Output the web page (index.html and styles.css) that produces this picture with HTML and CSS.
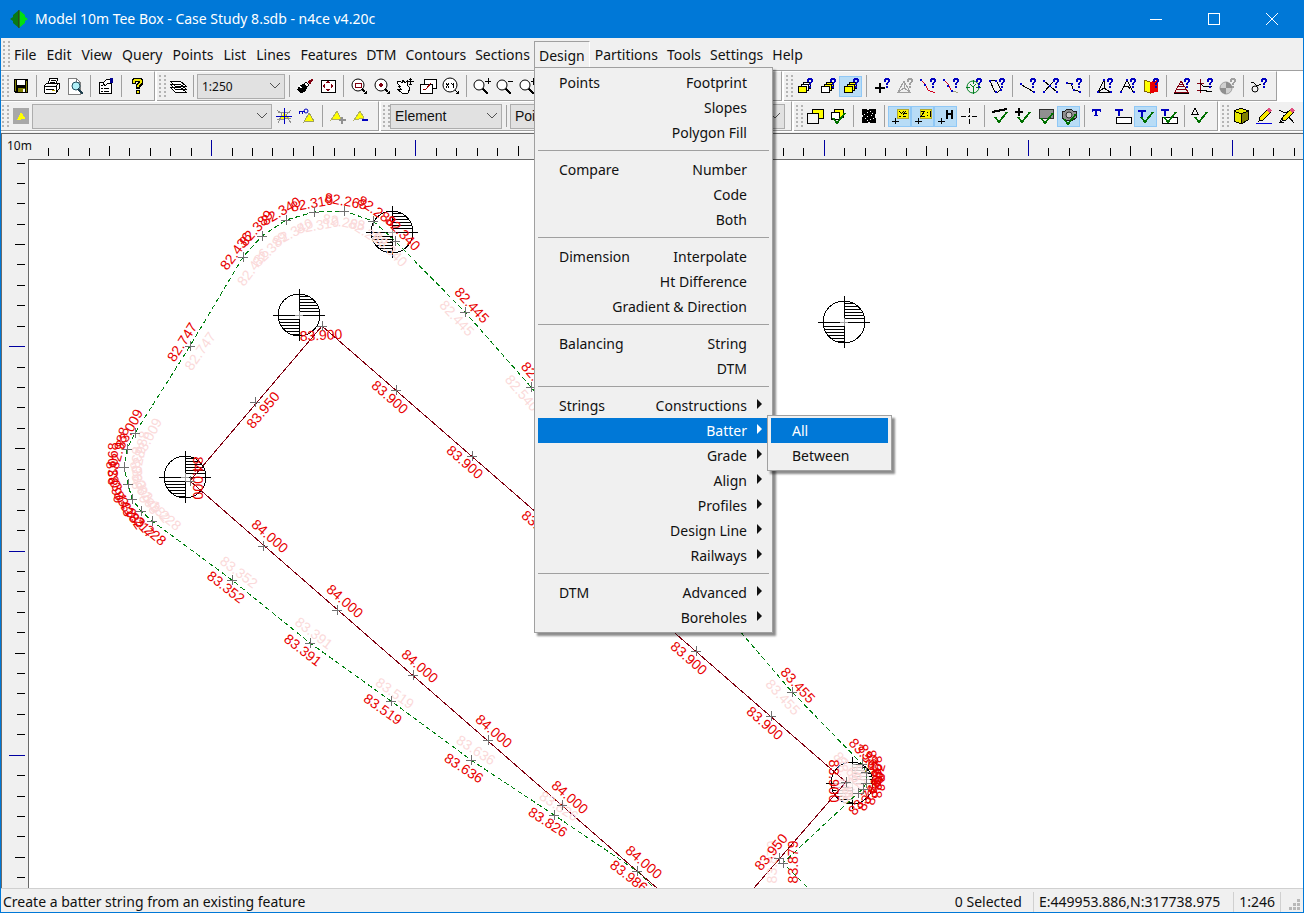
FILE: index.html
```html
<!DOCTYPE html>
<html lang="en">
<head>
<meta charset="utf-8">
<title>Model 10m Tee Box - Case Study 8.sdb - n4ce v4.20c</title>
<link rel="stylesheet" href="styles.css">
</head>
<body>
<svg class="defs" aria-hidden="true">
  <symbol id="qm" viewBox="0 0 18 18"><path d="M12 1h4v2h-4zM11 2h2v3h-2zM15 2h2v3h-2zM14 5h2v1h-2zM13 6h2v2h-2zM13 9h2v2h-2z" fill="currentColor"/></symbol>
  <symbol id="q" viewBox="0 0 18 18"><use href="#qm" color="#0000c0"/></symbol>
  <symbol id="tick" viewBox="0 0 18 18"><path d="M4 10l4 5 8-10" fill="none" stroke="#007000" stroke-width="2"/></symbol>
  <symbol id="chev" viewBox="0 0 12 8"><path d="M1 1l5 5 5-5" fill="none" stroke="#505050"/></symbol>
  <symbol id="arr" viewBox="0 0 5 10"><path d="M0 0l5 5-5 5z" fill="currentColor"/></symbol>
</svg>
<div class="window">
  <header class="titlebar">
    <svg class="logo" viewBox="0 0 18 18"><path d="M9 0L3 5v2L0 9l3 2v2l6 5z" fill="#0a7a14"/><path d="M9 0l6 5v2l3 2-3 2v2l-6 5z" fill="#00e010"/><path d="M9 0v18" stroke="#402020"/></svg>
    <h1>Model 10m Tee Box - Case Study 8.sdb - n4ce v4.20c</h1>
    <button class="winbtn" aria-label="Minimize"><svg viewBox="0 0 12 12"><path d="M0 6h12"/></svg></button>
    <button class="winbtn" aria-label="Maximize"><svg viewBox="0 0 12 12"><path d="M0 0h11v11H0z"/></svg></button>
    <button class="winbtn" aria-label="Close"><svg viewBox="0 0 12 12"><path class="smooth" d="M0 0l12 12M12 0L0 12"/></svg></button>
  </header>

  <nav class="menubar">
    <span class="grip"></span>
    <button>File</button><button>Edit</button><button>View</button><button>Query</button><button>Points</button><button>List</button><button>Lines</button><button>Features</button><button>DTM</button><button>Contours</button><button>Sections</button>
    <div class="open">
      <button>Design</button>
      <div class="popup">
        <button><span>Points</span><span>Footprint</span></button>
        <button><span></span><span>Slopes</span></button>
        <button><span></span><span>Polygon Fill</span></button>
        <hr>
        <button><span>Compare</span><span>Number</span></button>
        <button><span></span><span>Code</span></button>
        <button><span></span><span>Both</span></button>
        <hr>
        <button><span>Dimension</span><span>Interpolate</span></button>
        <button><span></span><span>Ht Difference</span></button>
        <button><span></span><span>Gradient &amp; Direction</span></button>
        <hr>
        <button><span>Balancing</span><span>String</span></button>
        <button><span></span><span>DTM</span></button>
        <hr>
        <button class="sub"><span>Strings</span><span>Constructions</span><svg><use href="#arr"/></svg></button>
        <div class="host">
          <button class="sub active"><span></span><span>Batter</span><svg><use href="#arr"/></svg></button>
          <div class="popup side">
            <button class="active"><span>All</span></button>
            <button><span>Between</span></button>
          </div>
        </div>
        <button class="sub"><span></span><span>Grade</span><svg><use href="#arr"/></svg></button>
        <button class="sub"><span></span><span>Align</span><svg><use href="#arr"/></svg></button>
        <button class="sub"><span></span><span>Profiles</span><svg><use href="#arr"/></svg></button>
        <button class="sub"><span></span><span>Design Line</span><svg><use href="#arr"/></svg></button>
        <button class="sub"><span></span><span>Railways</span><svg><use href="#arr"/></svg></button>
        <hr>
        <button class="sub"><span>DTM</span><span>Advanced</span><svg><use href="#arr"/></svg></button>
        <button class="sub"><span></span><span>Boreholes</span><svg><use href="#arr"/></svg></button>
      </div>
    </div>
    <button>Partitions</button><button>Tools</button><button>Settings</button><button>Help</button>
  </nav>

  <div class="barrow">
    <div class="bar">
      <span class="grip"></span>
      <button class="tb" aria-label="Save"><svg viewBox="0 0 18 18"><path d="M2 2h14v14H3l-1-1z" fill="#000"/><path d="M5 3h8v5H5z" fill="#fff"/><path d="M6 11h7v4H6z" fill="#808000"/><path d="M11 12h2v3h-2z" fill="#fff"/><path d="M3 3h1v11H3zM14 4h1v11h-1z" fill="#808000"/></svg></button>
      <i class="sep"></i>
      <button class="tb" aria-label="Print"><svg viewBox="0 0 18 18"><path d="M5 7l2-6h8l-2 6M1 9l3-3h12v6l-3 4H2zM1 9h12l3-3M13 9v6M3 12h8" fill="#fff" stroke="#000"/><path d="M8 3h5M7 5h5" stroke="#000"/><path d="M9 13h3" stroke="#c0a000"/></svg></button>
      <button class="tb" aria-label="Print preview"><svg viewBox="0 0 18 18"><path d="M2 1h8l4 4v12H2z" fill="#fff" stroke="#808080"/><path d="M10 1v4h4" fill="none" stroke="#808080"/><circle cx="10" cy="9" r="4" fill="#b0f0f8" stroke="#205060"/><path d="M12 12l5 5" stroke="#204050" stroke-width="2"/></svg></button>
      <i class="sep"></i>
      <button class="tb" aria-label="Properties"><svg viewBox="0 0 18 18"><path d="M2 5h12v11H2z" fill="#fff" stroke="#000"/><path d="M4 8h2M4 11h2M4 14h2M7 11h5M7 14h5" stroke="#000"/><path d="M6 6l4-4h4l2 3-3 2-2-1-3 3z" fill="#fff" stroke="#000"/><path d="M13 1h3v5h-3z" fill="#000090"/></svg></button>
      <i class="sep"></i>
      <button class="tb" aria-label="Help"><svg viewBox="0 0 18 18"><path d="M5 1h9l1 2v4l-3 3v2H8V8l2-3H8v2H4V3zM8 13h4v4H8z" fill="#000"/><path d="M6 2h7v1h1v3h-1v1h-1v1h-1v2H9V8h1V7h1V6h1V4H7v2H5V3h1zM9 14h2v2H9z" fill="#f0e800"/></svg></button>
    </div>
    <div class="bar grow">
      <span class="grip"></span>
      <button class="tb" aria-label="Layers"><svg viewBox="0 0 18 18"><path d="M1 10h10l6 5H6zM1 7h10l6 5H6zM1 4h10l6 5H6z" fill="#fff" stroke="#000"/></svg></button>
      <i class="sep"></i>
      <label class="combo scale"><select aria-label="Scale"><option>1:250</option></select><svg><use href="#chev"/></svg></label>
      <i class="sep"></i>
      <button class="tb" aria-label="Redraw"><svg viewBox="0 0 18 18"><path d="M3 9l4-2 4 4-2 4-5 1-3-3z" fill="#000"/><path d="M8 7l2-2 3 3-2 2z" fill="#fff" stroke="#000"/><path d="M11 5l5-3 1 1-3 5z" fill="#800010"/><path d="M2 8l4 3" stroke="#fff"/></svg></button>
      <button class="tb" aria-label="Zoom extents"><svg viewBox="0 0 18 18"><path d="M2 3h14v12H2z" fill="#fff" stroke="#000"/><path d="M8 4h2v2H8zM8 12h2v2H8zM4 8h2v2H4zM12 8h2v2h-2zM7 5h4v1H7zM7 12h4v1H7zM5 7h1v4H5zM12 7h1v4h-1z" fill="#800010"/></svg></button>
      <i class="sep"></i>
      <button class="tb" aria-label="Zoom window"><svg viewBox="0 0 18 18"><circle cx="8" cy="8" r="6" fill="#fff" stroke="#000"/><path d="M5 6h6v4H5z" fill="none" stroke="#800010"/><path d="M12 12l3 3" stroke="#000" stroke-width="2"/><path d="M17 13v4h-4z"/></svg></button>
      <button class="tb" aria-label="Zoom centre"><svg viewBox="0 0 18 18"><circle cx="8" cy="8" r="6" fill="#fff" stroke="#000"/><path d="M8 6v4M6 8h4" stroke="#800010" stroke-width="2"/><path d="M12 12l3 3" stroke="#000" stroke-width="2"/><path d="M17 13v4h-4z"/></svg></button>
      <button class="tb" aria-label="Pan"><svg viewBox="0 0 18 18"><path d="M1 5l3-1 2 2 1-3 2 3 2-2v4l3 3-2 5H6l-5-4h4L2 9l3 1-4-4z" fill="#fff" stroke="#000"/><path d="M14 1v7M11 4h7M13 2h3M13 7h3" stroke="#000"/></svg></button>
      <button class="tb" aria-label="Windows"><svg viewBox="0 0 18 18"><path d="M5 2h12v9H5z" fill="#fff" stroke="#000"/><path d="M1 7h12v9H1z" fill="#fff" stroke="#000"/><path d="M4 12h3l5-6" fill="none" stroke="#900" /></svg></button>
      <button class="tb" aria-label="Zoom to coordinate"><svg viewBox="0 0 18 18"><circle cx="8" cy="8" r="7" fill="#fff" stroke="#000"/><path d="M4 6l3 5M7 6l-3 5M9 6l2 2 1-2M11 8v3M13 13l2 2" fill="none" stroke="#000"/><path d="M17 13v4h-4z"/></svg></button>
      <i class="sep"></i>
      <button class="tb" aria-label="Zoom in"><svg viewBox="0 0 18 18"><circle cx="6" cy="8" r="5" fill="#fff" stroke="#000"/><path d="M10 12l5 5" stroke="#000" stroke-width="2"/><path d="M12 4h6M15 1v6" stroke="#000"/></svg></button>
      <button class="tb" aria-label="Zoom out"><svg viewBox="0 0 18 18"><circle cx="6" cy="8" r="5" fill="#fff" stroke="#000"/><path d="M10 12l5 5" stroke="#000" stroke-width="2"/><path d="M12 4h5" stroke="#000"/></svg></button>
      <button class="tb" aria-label="Zoom factor"><svg viewBox="0 0 18 18"><circle cx="6" cy="8" r="5" fill="#fff" stroke="#000"/><path d="M10 12l5 5" stroke="#000" stroke-width="2"/><path d="M17 1h-2l-1 7M12 4h5" fill="none" stroke="#000"/></svg></button>
    </div>
    <div class="bar">
      <span class="grip"></span>
      <button class="tb" aria-label="Query front layer"><svg viewBox="0 0 18 18"><path d="M7 5h7v6H7z" fill="#fff" stroke="#000"/><path d="M5 7h7v6H5z" fill="#fff" stroke="#000"/><path d="M2 9h8v6H2z" fill="#ff0" stroke="#000"/><use href="#q"/></svg></button>
      <button class="tb" aria-label="Query back layer"><svg viewBox="0 0 18 18"><path d="M7 5h7v6H7z" fill="#ff0" stroke="#000"/><path d="M5 7h7v6H5z" fill="#ff0" stroke="#000"/><path d="M2 9h8v6H2z" fill="#fff" stroke="#000"/><use href="#q"/></svg></button>
      <button class="tb on" aria-label="Query all layers"><svg viewBox="0 0 18 18"><path d="M7 5h7v6H7z" fill="#ff0" stroke="#000"/><path d="M5 7h7v6H5z" fill="#ff0" stroke="#000"/><path d="M2 9h8v6H2z" fill="#ff0" stroke="#000"/><use href="#q"/></svg></button>
      <i class="sep"></i>
      <button class="tb" aria-label="Query point"><svg viewBox="0 0 18 18"><path d="M2 11h10M7 6v10" stroke="#000" stroke-width="2"/><use href="#q"/></svg></button>
      <button class="tb" aria-label="Query triangle" disabled><svg viewBox="0 0 18 18"><path d="M2 15L8 4l6 11zM2 15l6-4 6 4M8 4v7" fill="none" stroke="#a0a0a0"/><use href="#qm" color="#a0a0a0"/></svg></button>
      <button class="tb" aria-label="Query line"><svg viewBox="0 0 18 18"><path d="M2 3l4 4 3 6 7 3" fill="none" stroke="#d00020"/><path d="M1 2h2v2H1zM5 7h2v2H5z" fill="#00c"/><use href="#q"/></svg></button>
      <button class="tb" aria-label="Query segment"><svg viewBox="0 0 18 18"><path d="M2 3l4 4 3 6" fill="none" stroke="#d00020"/><path d="M9 13l7 3" stroke="#a0a080"/><path d="M1 2h2v2H1zM5 8h2v2H5zM9 13h2v2H9z" fill="#00c"/><use href="#q"/></svg></button>
      <button class="tb" aria-label="Query circle"><svg viewBox="0 0 18 18"><circle cx="8" cy="10" r="6" fill="none" stroke="#008020"/><path d="M8 3v4M8 13v4M1 10h4M11 10h5M5 7l3 3 3-3M8 10v3" fill="none" stroke="#008020"/><use href="#q"/></svg></button>
      <button class="tb" aria-label="Query shape"><svg viewBox="0 0 18 18"><path d="M2 4l6-1 5 10-5 3-2-3z" fill="none" stroke="#000"/><path d="M1 3h2v2H1zM7 3h2v2H7zM12 12h2v2h-2zM7 14h2v2H7z" fill="#00c"/><use href="#q"/></svg></button>
      <i class="sep"></i>
      <button class="tb" aria-label="Query string"><svg viewBox="0 0 18 18"><path d="M1 7l14 8" stroke="#000"/><path d="M1 6h2v2H1zM14 14h2v2h-2z" fill="#00c"/><use href="#q"/></svg></button>
      <button class="tb" aria-label="Query intersection"><svg viewBox="0 0 18 18"><path d="M2 4l13 11M2 15l9-10" stroke="#000"/><path d="M1 3h2v2H1zM14 14h2v2h-2zM1 14h2v2H1zM7 8h2v2H7z" fill="#00c"/><use href="#q"/></svg></button>
      <button class="tb" aria-label="Query curve"><svg viewBox="0 0 18 18"><path d="M1 6h5l2 6 7 3" fill="none" stroke="#000"/><path d="M1 5h2v2H1zM6 6h2v2H6zM8 12h2v2H8zM14 14h2v2h-2z" fill="#00c"/><use href="#q"/></svg></button>
      <i class="sep"></i>
      <button class="tb" aria-label="Query angle"><svg viewBox="0 0 18 18"><path d="M2 15L8 3v8l6 4zM8 11l-6 4" fill="none" stroke="#000"/><path d="M1 14h2v2H1zM7 2h2v2H7zM14 14h2v2h-2z" fill="#00c"/><use href="#q"/></svg></button>
      <button class="tb" aria-label="Query area"><svg viewBox="0 0 18 18"><path d="M2 15L8 3l6 12M5 10c3-2 5 0 6 2" fill="none" stroke="#000"/><path d="M1 14h2v2H1zM7 2h2v2H7zM14 14h2v2h-2z" fill="#00c"/><use href="#q"/></svg></button>
      <button class="tb" aria-label="Query volume"><svg viewBox="0 0 18 18"><path d="M2 3l6 2v11l-6-2z" fill="#ff0" stroke="#806000"/><path d="M8 5l8-2v12l-8 1z" fill="#e80000"/><use href="#q"/></svg></button>
      <i class="sep"></i>
      <button class="tb" aria-label="Query contour"><svg viewBox="0 0 18 18"><path d="M2 15L8 4l7 11zM4 12l9 1M5 9l6 1M7 7l3 1" fill="none" stroke="#800010"/><path d="M1 16h15" stroke="#000"/><use href="#q"/></svg></button>
      <button class="tb" aria-label="Query section"><svg viewBox="0 0 18 18"><path d="M4 2v14M1 6h7M1 13h5" stroke="#800010"/><path d="M4 13h5l3 2 4-1M4 6l4 4 5-1 3 1" fill="none" stroke="#000"/><use href="#q"/></svg></button>
      <button class="tb" aria-label="Query station" disabled><svg viewBox="0 0 18 18"><circle cx="7" cy="11" r="6" fill="#d0d0d0" stroke="#a0a0a0"/><path d="M7 5v6h6a6 6 0 0 0-6-6zM7 17v-6H1a6 6 0 0 0 6 6z" fill="#909090"/><use href="#qm" color="#a0a0a0"/></svg></button>
      <i class="sep"></i>
      <button class="tb" aria-label="Query object"><svg viewBox="0 0 18 18"><circle cx="5" cy="12" r="3" fill="none" stroke="#000"/><path d="M1 5l3 1 3 3 4-2" fill="none" stroke="#000"/><use href="#q"/></svg></button>
    </div>
    <div class="rest"></div>
  </div>

  <div class="barrow second">
    <div class="bar">
      <span class="grip"></span>
      <button class="tb" aria-label="Snap"><svg viewBox="0 0 18 18"><path d="M1 1h16v16H1z" fill="#a8a8a8"/><path d="M5 13l4-8 4 6v1z" fill="#ff0"/></svg></button>
      <label class="combo wide"><select aria-label="Feature"><option></option></select><svg><use href="#chev"/></svg></label>
      <button class="tb" aria-label="Crosshair"><svg viewBox="0 0 18 18"><path d="M5 12l4-7 5 6z" fill="#ff0"/><path d="M2 3l5 4-4 9M16 3l-5 5 5 8M2 13l14-2M3 6l12-1" fill="none" stroke="#909090"/><path d="M9 1v16M1 9h16" stroke="#0000c0"/></svg></button>
      <button class="tb" aria-label="Pick point"><svg viewBox="0 0 18 18"><path d="M6 15l5-9 5 8z" fill="#ff0" stroke="#a0a060"/><path d="M1 4h6M1 4v3M4 4v3" fill="none" stroke="#0000c0"/><circle cx="8" cy="4" r="2" fill="none" stroke="#0000c0"/></svg></button>
      <i class="sep"></i>
      <button class="tb" aria-label="Add point"><svg viewBox="0 0 18 18"><path d="M2 13l6-9 4 8z" fill="#ff0" stroke="#b0b060"/><path d="M10 13h7M13 10v7" stroke="#909090" stroke-width="2"/></svg></button>
      <button class="tb" aria-label="Remove point"><svg viewBox="0 0 18 18"><path d="M2 13l6-9 4 7z" fill="#ff0" stroke="#b0b060"/><path d="M10 13h6" stroke="#0000c0" stroke-width="2"/></svg></button>
    </div>
    <div class="bar grow">
      <span class="grip"></span>
      <label class="combo element"><select aria-label="Type"><option>Element</option></select><svg><use href="#chev"/></svg></label>
      <i class="sep"></i>
      <label class="combo fill"><select aria-label="Item"><option>Point</option></select><svg><use href="#chev"/></svg></label>
    </div>
    <div class="bar">
      <span class="grip"></span>
      <button class="tb" aria-label="Layers"><svg viewBox="0 0 18 18"><path d="M6 2h11v9H6z" fill="#ff0" stroke="#000"/><path d="M1 6h11v10H1z" fill="#f4f4f4" stroke="#000"/></svg></button>
      <button class="tb" aria-label="Check layers"><svg viewBox="0 0 18 18"><path d="M5 2h9v8H5z" fill="#ff0" stroke="#000"/><path d="M2 5h8v7H2z" fill="#fff" stroke="#000"/><use href="#tick" y="1"/></svg></button>
      <i class="sep"></i>
      <button class="tb" aria-label="Point display"><svg viewBox="0 0 18 18"><path d="M2 2h4l2 1 2-1h6v4l-1 3 1 3v4h-5l-2-1-2 1H2v-5l1-2-1-3z" fill="#000"/><path d="M4 7h1v1H4zM7 5h1v1H7zM10 4h1v1h-1zM12 6h1v1h-1zM11 8h1v1h-1zM5 11h1v1H5zM7 9h1v1H7zM10 12h1v1h-1zM13 11h1v1h-1zM7 13h1v1H7z" fill="#fff"/></svg></button>
      <i class="sep"></i>
      <button class="tb on" aria-label="Point codes"><svg viewBox="0 0 18 18"><path d="M6 2h11v9H6z" fill="#f8f000" stroke="#b0a830"/><path d="M8 4l3 3M13 4l-3 3M12 8l3-4M8 9h2M12 9h3M14 6h2" stroke="#000"/><path d="M1 14h7M4 11v6" stroke="#000"/></svg></button>
      <button class="tb on" aria-label="Point levels"><svg viewBox="0 0 18 18"><path d="M6 2h11v9H6z" fill="#f8f000" stroke="#b0a830"/><path d="M7 4h4l-4 5h4M13 5v1M13 8v1M16 4v6" fill="none" stroke="#000"/><path d="M1 14h7M4 11v6" stroke="#000"/></svg></button>
      <button class="tb on" aria-label="Point heights"><svg viewBox="0 0 18 18"><path d="M10 3v9M15 3v9M10 7h5" stroke="#000" stroke-width="2"/><path d="M1 14h7M4 11v6" stroke="#000"/></svg></button>
      <button class="tb" aria-label="Point markers"><svg viewBox="0 0 18 18"><path d="M1 9h5M12 9h5M8 9h2M9 1v5M9 12v5M9 8v2" stroke="#000"/></svg></button>
      <i class="sep"></i>
      <button class="tb" aria-label="Check lines"><svg viewBox="0 0 18 18"><path d="M1 5l15-3" stroke="#000" stroke-width="2"/><use href="#tick"/></svg></button>
      <button class="tb" aria-label="Check points"><svg viewBox="0 0 18 18"><path d="M1 5h8M5 1v8" stroke="#000" stroke-width="2"/><use href="#tick"/></svg></button>
      <button class="tb" aria-label="Check surfaces"><svg viewBox="0 0 18 18"><path d="M2 2h14v9H8l-2 1-4-1z" fill="#909090" stroke="#303030"/><use href="#tick" y="1"/></svg></button>
      <button class="tb on" aria-label="Check images"><svg viewBox="0 0 18 18"><path d="M2 4h3l2-2h4l2 2h3v7l-3 2H5l-3-2z" fill="#909090" stroke="#202020"/><use href="#tick" y="2"/><circle cx="9" cy="8" r="3" fill="#c8c8c8" stroke="#303030"/></svg></button>
      <i class="sep"></i>
      <button class="tb" aria-label="Text"><svg viewBox="0 0 18 18"><path d="M1 3h8M5 2v7" stroke="#0000c0" stroke-width="2"/><path d="M3 8h4M1 2v3M9 2v3" stroke="#0000c0"/></svg></button>
      <button class="tb" aria-label="Text box"><svg viewBox="0 0 18 18"><path d="M1 3h8M5 2v7" stroke="#0000c0" stroke-width="2"/><path d="M2 10h15v6H2z" fill="#fff" stroke="#000"/></svg></button>
      <button class="tb on" aria-label="Check text"><svg viewBox="0 0 18 18"><path d="M1 4h8M5 3v7" stroke="#0000c0" stroke-width="2"/><use href="#tick"/></svg></button>
      <button class="tb" aria-label="Check text box"><svg viewBox="0 0 18 18"><path d="M2 10h15v6H2z" fill="#fff" stroke="#000"/><path d="M1 3h8M5 2v7" stroke="#0000c0" stroke-width="2"/><use href="#tick"/></svg></button>
      <i class="sep"></i>
      <button class="tb" aria-label="Check symbols"><svg viewBox="0 0 18 18"><path d="M1 7l3-6 3 6z" fill="none" stroke="#000"/><use href="#tick"/></svg></button>
    </div>
    <div class="bar last">
      <span class="grip"></span>
      <button class="tb" aria-label="3D view"><svg viewBox="0 0 18 18"><path d="M2 4l7-3 7 3v9l-7 4-7-3z" fill="#e8e800" stroke="#000"/><path d="M9 7l7-3v9l-7 4z" fill="#808000" stroke="#000"/><path d="M2 4l7 3" stroke="#000"/></svg></button>
      <button class="tb" aria-label="Edit"><svg viewBox="0 0 18 18"><path d="M4 14l1-4 8-8 3 3-8 8z" fill="#f8e800" stroke="#000"/><path d="M13 2l3 3" stroke="#e05080" stroke-width="3"/><path d="M1 16h16" stroke="#0000e0"/></svg></button>
      <button class="tb" aria-label="Edit surface"><svg viewBox="0 0 18 18"><path d="M1 3l6 3 9-4M2 15l4-7M10 9l6 7M1 15h5" fill="none" stroke="#000"/><path d="M4 14l1-4 8-8 3 3-8 8z" fill="#f8e800" stroke="#000"/><path d="M13 2l3 3" stroke="#e05080" stroke-width="3"/></svg></button>
    </div>
  </div>

  <main class="view">
    <div class="unit">10m</div>
    <svg class="hruler"><g transform="translate(-28 -134)">
      <path stroke="#000" d="M48 148v8M68 148v8M89 148v8M109 146v10M129 148v8M150 148v8M170 148v8M191 148v8M232 148v8M252 148v8M272 148v8M293 148v8M313 146v10M334 148v8M354 148v8M375 148v8M395 148v8M436 148v8M456 148v8M477 148v8M497 148v8M518 146v10M538 148v8M559 148v8M579 148v8M599 148v8M640 148v8M660 148v8M681 148v8M701 148v8M722 146v10M742 148v8M763 148v8M783 148v8M803 148v8M844 148v8M865 148v8M885 148v8M906 148v8M926 146v10M947 148v8M967 148v8M987 148v8M1008 148v8M1048 148v8M1069 148v8M1089 148v8M1110 148v8M1130 146v10M1151 148v8M1171 148v8M1192 148v8M1212 148v8M1253 148v8M1273 148v8M1294 148v8"/>
      <path stroke="#0000a0" d="M211 140v16M415 140v16M619 140v16M824 140v16M1028 140v16M1232 140v16"/>
    </g></svg>
    <svg class="vruler"><g transform="translate(-2 -159)">
      <path stroke="#000" d="M17 163h8M17 183h8M17 203h8M17 224h8M15 244h10M17 264h8M17 285h8M17 305h8M17 326h8M17 367h8M17 387h8M17 407h8M17 428h8M15 448h10M17 469h8M17 489h8M17 510h8M17 530h8M17 571h8M17 591h8M17 612h8M17 632h8M15 653h10M17 673h8M17 693h8M17 714h8M17 734h8M17 775h8M17 796h8M17 816h8M17 836h8M15 857h10M17 877h8"/>
      <path stroke="#0000a0" d="M9 346h16M9 551h16M9 755h16"/>
    </g></svg>
    <svg class="plan">
      <defs>
        <g id="station"><circle r="21"/><path d="M-26 0h52M0-26v52M0-4h20M0-7h20M0-10h18M0-13h16M0-16h13M0-19h9M0 4h-20M0 7h-20M0 10h-18M0 13h-16M0 16h-13M0 19h-9"/><path class="mid" d="M-4 0h8M0-4v8"/></g>
        <path id="x" d="M-5 0h10M0-5v10"/>
      </defs>
      <g transform="translate(-29 -160)">
        <g class="stations"><use href="#station" x="392" y="232"/><use href="#station" x="299" y="315"/><use href="#station" x="185" y="477"/><use href="#station" x="844" y="322"/><use href="#station" x="852" y="783"/></g>
        <circle class="veil" cx="852" cy="782" r="18"/>
        <path class="crest" d="M657 888L637 871 190 481 322 326 846 782 754 888"/>
        <path class="toe" d="M652 886L637 871 554 815 471 760 391 701 310 643 232 580 152 521 141 511 132 499 128 484 124 467 127 449 135 433 190 346 243 257 262 236 286 220 314 212 344 211 373 221 395 241 465 312 531 387 792 692 862 764 866 772 866 783 863 789 858 793 783 863 808 888"/>
        <g class="ghost">
          <text transform="translate(253 267) rotate(-53)" dy="5">82.436</text>
          <text transform="translate(270 249) rotate(-45)" dy="5">82.389</text>
          <text transform="translate(293 232) rotate(-28)" dy="5">82.340</text>
          <text transform="translate(318 225) rotate(-10)" dy="5">82.319</text>
          <text transform="translate(344 222) rotate(10)" dy="5">82.268</text>
          <text transform="translate(368 233) rotate(32)" dy="5">82.288</text>
          <text transform="translate(390 249) rotate(45)" dy="5">82.340</text>
          <text transform="translate(200 351) rotate(-55)" dy="5">82.747</text>
          <text transform="translate(148 438) rotate(-62)" dy="5">83.009</text>
          <text transform="translate(140 452) rotate(-78)" dy="5">82.988</text>
          <text transform="translate(137 468) rotate(90)" dy="5">83.068</text>
          <text transform="translate(140 482) rotate(75)" dy="5">83.090</text>
          <text transform="translate(146 494) rotate(62)" dy="5">83.143</text>
          <text transform="translate(154 504) rotate(50)" dy="5">83.182</text>
          <text transform="translate(163 514) rotate(40)" dy="5">83.228</text>
          <text transform="translate(239 572) rotate(37)" dy="5">83.352</text>
          <text transform="translate(314 633) rotate(37)" dy="5">83.391</text>
          <text transform="translate(395 693) rotate(35)" dy="5">83.519</text>
          <text transform="translate(476 750) rotate(33)" dy="5">83.636</text>
          <text transform="translate(559 806) rotate(33)" dy="5">83.826</text>
          <text transform="translate(457 318) rotate(47)" dy="5">82.445</text>
          <text transform="translate(522 393) rotate(49)" dy="5">82.540</text>
          <text transform="translate(783 697) rotate(47)" dy="5">83.455</text>
          <text transform="translate(772 862) rotate(-90)" dy="5">83.879</text>
          <text transform="translate(850 770) rotate(50)" dy="5">83.662</text>
          <text transform="translate(852 784) rotate(-60)" dy="5">83.702</text>
          <text transform="translate(845 778) rotate(80)" dy="5">83.744</text>
        </g>
        <g class="level">
          <text transform="translate(236 251) rotate(-53)" dy="5">82.436</text>
          <text transform="translate(256 228) rotate(-48)" dy="5">82.389</text>
          <text transform="translate(281 211) rotate(-30)" dy="5">82.340</text>
          <text transform="translate(312 203) rotate(-10)" dy="5">82.319</text>
          <text transform="translate(346 201) rotate(10)" dy="5">82.268</text>
          <text transform="translate(377 211) rotate(35)" dy="5">82.288</text>
          <text transform="translate(403 233) rotate(45)" dy="5">82.340</text>
          <text transform="translate(182 342) rotate(-57)" dy="5">82.747</text>
          <text transform="translate(129 429) rotate(-62)" dy="5">83.009</text>
          <text transform="translate(119 448) rotate(-75)" dy="5">82.988</text>
          <text transform="translate(113 464) rotate(-90)" dy="5">83.068</text>
          <text transform="translate(115 482) rotate(78)" dy="5">83.090</text>
          <text transform="translate(121 496) rotate(66)" dy="5">83.143</text>
          <text transform="translate(129 510) rotate(56)" dy="5">83.182</text>
          <text transform="translate(138 520) rotate(48)" dy="5">83.217</text>
          <text transform="translate(148 529) rotate(40)" dy="5">83.228</text>
          <text transform="translate(226 587) rotate(38)" dy="5">83.352</text>
          <text transform="translate(303 650) rotate(38)" dy="5">83.391</text>
          <text transform="translate(383 709) rotate(35)" dy="5">83.519</text>
          <text transform="translate(464 768) rotate(33)" dy="5">83.636</text>
          <text transform="translate(548 822) rotate(33)" dy="5">83.826</text>
          <text transform="translate(629 876) rotate(38)" dy="5">83.986</text>
          <text transform="translate(472 305) rotate(47)" dy="5">82.445</text>
          <text transform="translate(538 380) rotate(49)" dy="5">82.540</text>
          <text transform="translate(798 685) rotate(47)" dy="5">83.455</text>
          <text transform="translate(321 335) rotate(-3)" dy="5">83.900</text>
          <text transform="translate(263 410) rotate(-50)" dy="5">83.950</text>
          <text transform="translate(198 478) rotate(90)" dy="5">84.000</text>
          <text transform="translate(390 397) rotate(41)" dy="5">83.900</text>
          <text transform="translate(465 462) rotate(41)" dy="5">83.900</text>
          <text transform="translate(540 527) rotate(41)" dy="5">83.900</text>
          <text transform="translate(689 658) rotate(41)" dy="5">83.900</text>
          <text transform="translate(765 723) rotate(41)" dy="5">83.900</text>
          <text transform="translate(270 536) rotate(41)" dy="5">84.000</text>
          <text transform="translate(345 601) rotate(41)" dy="5">84.000</text>
          <text transform="translate(420 666) rotate(41)" dy="5">84.000</text>
          <text transform="translate(494 731) rotate(41)" dy="5">84.000</text>
          <text transform="translate(570 797) rotate(41)" dy="5">84.000</text>
          <text transform="translate(644 862) rotate(41)" dy="5">84.000</text>
          <text transform="translate(834 781) rotate(90)" dy="5">83.900</text>
          <text transform="translate(771 852) rotate(-50)" dy="5">83.950</text>
          <text transform="translate(793 862) rotate(-90)" dy="5">83.879</text>
          <text transform="translate(866 756) rotate(48)" dy="5">83.563</text>
          <text transform="translate(872 764) rotate(62)" dy="5">83.588</text>
          <text transform="translate(876 771) rotate(76)" dy="5">83.602</text>
          <text transform="translate(877 777) rotate(90)" dy="5">83.628</text>
          <text transform="translate(875 784) rotate(-74)" dy="5">83.662</text>
          <text transform="translate(871 791) rotate(-60)" dy="5">83.688</text>
          <text transform="translate(865 797) rotate(-48)" dy="5">83.744</text>
        </g>
        <g class="marks">
          <use href="#x" x="243" y="257"/><use href="#x" x="262" y="236"/><use href="#x" x="286" y="220"/><use href="#x" x="314" y="212"/><use href="#x" x="344" y="211"/><use href="#x" x="373" y="221"/><use href="#x" x="395" y="241"/><use href="#x" x="190" y="346"/><use href="#x" x="135" y="433"/><use href="#x" x="127" y="449"/><use href="#x" x="124" y="467"/><use href="#x" x="128" y="484"/><use href="#x" x="132" y="499"/><use href="#x" x="141" y="511"/><use href="#x" x="152" y="521"/><use href="#x" x="232" y="580"/><use href="#x" x="310" y="643"/><use href="#x" x="391" y="701"/><use href="#x" x="471" y="760"/><use href="#x" x="554" y="815"/><use href="#x" x="637" y="871"/><use href="#x" x="465" y="312"/><use href="#x" x="531" y="387"/><use href="#x" x="792" y="692"/>
          <use href="#x" x="322" y="326"/><use href="#x" x="255" y="402"/><use href="#x" x="190" y="481"/><use href="#x" x="396" y="390"/><use href="#x" x="472" y="456"/><use href="#x" x="696" y="651"/><use href="#x" x="771" y="716"/><use href="#x" x="846" y="782"/><use href="#x" x="263" y="546"/><use href="#x" x="337" y="610"/><use href="#x" x="413" y="675"/><use href="#x" x="488" y="740"/><use href="#x" x="562" y="805"/><use href="#x" x="779" y="858"/><use href="#x" x="783" y="863"/>
          <use href="#x" x="862" y="764"/><use href="#x" x="866" y="772"/><use href="#x" x="866" y="783"/><use href="#x" x="863" y="789"/><use href="#x" x="858" y="793"/>
        </g>
      </g>
    </svg>
  </main>

  <footer class="status">
    <span class="hint">Create a batter string from an existing feature</span>
    <span class="cell">0 Selected</span>
    <span class="cell coords">E:449953.886,N:317738.975</span>
    <span class="cell">1:246</span>
    <svg class="size" viewBox="0 0 12 12"><path d="M8 0h3v3H8zM4 4h3v3H4zM8 4h3v3H8zM0 8h3v3H0zM4 8h3v3H4zM8 8h3v3H8z"/></svg>
  </footer>
</div>
</body>
</html>
```
FILE: styles.css
```css
* { box-sizing: border-box; }
body { margin: 0; font: 14px/20px "Noto Sans", "Open Sans", sans-serif; color: #111; }
button { font: inherit; color: inherit; border: 0; padding: 0; background: none; }
.defs { position: absolute; width: 0; height: 0; }

.window { display: flex; flex-direction: column; height: 100vh; background: #f0f0f0; border: solid #0078d7; border-width: 0 1px 1px; overflow: hidden; }

.titlebar { display: flex; align-items: center; height: 38px; flex: none; background: #0078d7; color: #fff; padding: 0 2px 0 9px; }
.titlebar h1 { flex: 1; margin: 0 0 0 7px; font-size: 14px; font-weight: 400; }
.logo { width: 18px; height: 18px; }
.winbtn { width: 58px; height: 38px; display: grid; place-items: center; }
.winbtn svg { width: 12px; height: 12px; overflow: visible; fill: none; stroke: #fff; shape-rendering: crispEdges; }
.winbtn .smooth { shape-rendering: auto; }

.grip { width: 8px; align-self: stretch; margin: 3px 1px 3px 2px; background: radial-gradient(circle at 1px 1px, #b4b4b4 1px, transparent 1px) 0 0 / 5px 4px; flex: none; }

.menubar { display: flex; align-items: center; height: 33px; flex: none; border-bottom: 1px solid #a0a0a0; }
.menubar > button { padding: 2px 5px 0; height: 28px; white-space: nowrap; }
.menubar > button:nth-child(n+9) { padding-right: 4px; }
.menubar > .grip { margin-right: -2px; }
.open { position: relative; align-self: flex-end; height: 29px; border: solid #a0a0a0; border-width: 1px 0 0 1px; border-right: 1px solid #fff; }
.open > button { padding: 1px 4px 0; height: 27px; }
.popup { position: absolute; z-index: 2; left: -1px; top: 25px; width: 239px; padding: 2px 3px; background: #f0f0f0; border: 1px solid #a0a0a0; box-shadow: 3px 3px 2px rgba(0, 0, 0, .45); }
.popup button { display: flex; align-items: center; justify-content: space-between; width: 100%; height: 25px; padding: 0 22px 0 21px; white-space: nowrap; }
.popup .sub { padding-right: 7px; }
.popup .sub span + span { margin-left: auto; }
.popup .sub svg { width: 5px; height: 10px; margin: 0 0 3px 10px; }
.popup hr { height: 1px; margin: 5px 0 6px; border: 0; background: #a0a0a0; }
.popup .active { background: #0078d7; color: #fff; }
.host { position: relative; }
.popup.side { left: 229px; top: -3px; width: 125px; }

.barrow { display: flex; height: 30px; flex: none; background: #fff; }
.barrow.second { border-bottom: 1px solid #fff; height: 31px; }
.bar { display: flex; align-items: center; padding-right: 6px; background: #f0f0f0; border: solid #a0a0a0; border-width: 0 1px 1px 0; border-top: 1px solid #fff; margin-right: 2px; flex: none; }
.bar.grow { flex: 1 1 0; min-width: 0; }
.bar > .grip { margin: 3px 0 3px 2px; width: 7px; }
.bar:first-child > .grip { margin-left: 1px; }
.bar.last { margin: 0; padding: 0 5px 0 0; border-right: 0; }
.rest { width: 24px; flex: none; }
.tb { width: 23px; height: 24px; flex: none; display: grid; place-items: center; }
.tb svg { width: 18px; height: 18px; shape-rendering: crispEdges; }
.tb circle { shape-rendering: auto; }
.tb.on { background: #b8dcf6; box-shadow: inset 0 0 0 1px #90c8f6; height: 21px; }
.sep { width: 1px; height: 22px; margin: 0 3px 0 4px; background: #a0a0a0; flex: none; }

.combo { display: grid; height: 25px; margin: 0; flex: none; }
.combo select { grid-area: 1 / 1; appearance: none; width: 100%; padding: 0 4px; margin: 0; border: 1px solid #adadad; border-radius: 0; background: #e1e1e1; color: #111; font: 14px "Liberation Sans", sans-serif; }
.combo svg { grid-area: 1 / 1; place-self: center end; width: 12px; height: 8px; margin-right: 4px; pointer-events: none; }
.scale { width: 88px; }
.scale select { font: 12px "Noto Sans", sans-serif; }
.wide { width: 240px; }
.element { width: 112px; }
.fill { flex: 1; }

.view { flex: 1; min-height: 0; display: grid; grid-template: 25px 1fr / 26px 1fr; margin-top: 1px; border: solid #696969; border-width: 1px 0 0 1px; }
.view svg { width: 100%; height: 100%; display: block; }
.unit { font-size: 12px; line-height: 24px; padding-left: 5px; }
.hruler, .vruler { shape-rendering: crispEdges; overflow: hidden; }
.plan { background: #fff; border: solid #696969; border-width: 1px 0 0 1px; min-height: 0; }
.stations { fill: none; stroke: #000; shape-rendering: crispEdges; }
.mid { stroke: #a0a0a0; }
.veil { fill: #fff8f8; opacity: .8; }
.crest, .toe { fill: none; shape-rendering: crispEdges; }
.crest { stroke: #800010; }
.toe { stroke: #008010; stroke-dasharray: 5 3; }
.level, .ghost { font: 14px "Liberation Sans", Arial, sans-serif; text-anchor: middle; }
.level { fill: #e80000; }
.ghost { fill: #fbdada; }
.marks { fill: none; stroke: #707070; shape-rendering: crispEdges; }

.status { display: flex; align-items: center; height: 24px; flex: none; border-top: 1px solid #d0d0d0; padding: 2px 0 0 2px; white-space: nowrap; }
.hint { flex: 1; }
.cell { border-right: 1px solid #d0d0d0; padding: 0 11px 0 5px; }
.cell + .cell + .cell { padding-right: 5px; }
.cell.coords { padding-right: 13px; }
.size { width: 12px; height: 12px; margin: 6px 2px 0 8px; fill: #b8b8b8; }
```
